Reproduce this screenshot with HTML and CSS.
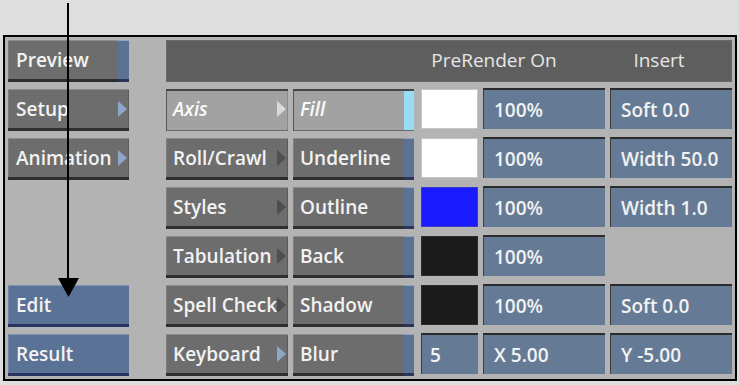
FILE: index.html
```html
<!DOCTYPE html>
<html lang="en">
<head>
    <meta charset="UTF-8">
    <meta name="viewport" content="width=device-width, initial-scale=1.0">
    <title>Text Layer Editor</title>
    <link rel="stylesheet" href="styles.css">
</head>
<body>
    <div class="panel">
        <div class="nav">
            <div class="btn">Preview <span class="strip wide"></span></div>
            <div class="btn">Setup <span class="tri"></span></div>
            <div class="btn">Animation <span class="tri"></span></div>
            <div class="btn blue editBtn">Edit</div>
            <div class="btn blue">Result</div>
        </div>

        <div class="grid">
            <div class="header">
                <span>PreRender On</span>
                <span>Insert</span>
            </div>

            <div class="btn active">Axis <span class="tri light"></span></div>
            <div class="btn active">Fill <span class="strip cyan"></span></div>
            <div class="swatch white"></div>
            <div class="field">100%</div>
            <div class="field">Soft 0.0</div>

            <div class="btn">Roll/Crawl <span class="tri dark"></span></div>
            <div class="btn">Underline <span class="strip"></span></div>
            <div class="swatch white"></div>
            <div class="field">100%</div>
            <div class="field">Width 50.0</div>

            <div class="btn">Styles <span class="tri dark"></span></div>
            <div class="btn">Outline <span class="strip"></span></div>
            <div class="swatch blueSwatch"></div>
            <div class="field">100%</div>
            <div class="field">Width 1.0</div>

            <div class="btn">Tabulation <span class="tri dark"></span></div>
            <div class="btn">Back <span class="strip"></span></div>
            <div class="swatch black"></div>
            <div class="field">100%</div>
            <div class="empty"></div>

            <div class="btn">Spell Check <span class="tri dark"></span></div>
            <div class="btn">Shadow <span class="strip"></span></div>
            <div class="swatch black"></div>
            <div class="field">100%</div>
            <div class="field">Soft 0.0</div>

            <div class="btn">Keyboard <span class="tri"></span></div>
            <div class="btn">Blur <span class="strip"></span></div>
            <div class="field small">5</div>
            <div class="field">X 5.00</div>
            <div class="field">Y -5.00</div>
        </div>
    </div>

    <!-- callout arrow pointing at the Edit button -->
    <svg class="callout" width="739" height="385" viewBox="0 0 739 385">
        <line x1="68" y1="3" x2="68" y2="282" stroke="#000" stroke-width="2"/>
        <polygon points="58,278 79,278 68.5,297" fill="#000"/>
    </svg>
</body>
</html>
```

FILE: styles.css
```css
body {
    margin: 0;
    padding: 0;
    background-color: #dedede;
    font-family: "Open Sans", "DejaVu Sans", sans-serif;
    color: #f2f2f2;
}

.panel {
    box-sizing: border-box;
    margin: 35px 0 0 3px;
    width: 734px;
    height: 346px;
    padding: 3px;
    border: 2px solid #000;
    background-color: #b3b3b3;
    display: flex;
    gap: 37px;
}

.nav,
.grid {
    display: grid;
    grid-template-rows: repeat(7, 42px);
    row-gap: 7px;
}

.nav {
    grid-template-columns: 121px;
}

.editBtn {
    grid-row: 6;
}

.editBtn + .btn {
    grid-row: 7;
}

.grid {
    grid-template-columns: 122px 121px 59px 122px 122px;
    column-gap: 5px;
}

.header {
    grid-column: 1 / -1;
    display: flex;
    align-items: center;
    padding: 0 0 2px 232px;
    background-color: #5e5e5e;
    box-shadow: inset 0 0 0 1px #6a6a6a;
    font-size: 19px;
    font-weight: 400;
    color: #e6e6e6;
}

.header span:first-child {
    width: 192px;
    text-align: center;
}

.header span:last-child {
    width: 138px;
    text-align: center;
}

.btn {
    box-sizing: border-box;
    height: 42px;
    display: flex;
    align-items: center;
    padding: 0 0 2px 8px;
    background-color: #6d6d6d;
    box-shadow: inset 0 -3px 0 #2e2e2e, inset 0 1px 0 #8c8c8c, inset 1px 0 0 #7e7e7e, inset -1px 0 0 #5a5a5a;
    font-size: 19px;
    font-weight: 600;
    white-space: nowrap;
    overflow: hidden;
}

.grid .btn {
    padding-left: 7px;
}

.btn.blue {
    background-color: #5a7296;
    box-shadow: inset 0 -3px 0 #2a3262, inset 0 1px 0 #7b91b2, inset 1px 0 0 #6e86a8;
}

.btn.active {
    background-color: #a2a2a2;
    box-shadow: inset 0 2px 0 #454545, inset 1px 0 0 #555, inset 0 -1px 0 #6a6a6a, inset -1px 0 0 #8a8a8a;
    font-style: italic;
    color: #fafafa;
}

.strip {
    align-self: stretch;
    margin: 0 0 -2px auto;
    width: 10px;
    background-color: #5b7293;
    box-shadow: inset 0 -3px 0 #2c3458, inset 0 1px 0 #90a4c2;
}

.strip.wide {
    width: 11px;
}

.strip.cyan {
    margin: 2px 0 -1px auto;
    background-color: #99dcf6;
    box-shadow: none;
}

.tri {
    width: 0;
    height: 0;
    margin: 0 2px 0 auto;
    border-left: 9px solid #8ea6c8;
    border-top: 8px solid transparent;
    border-bottom: 8px solid transparent;
}

.tri.dark {
    border-left-color: #4e4e4e;
}

.tri.light {
    border-left-color: #dadada;
}

.swatch {
    justify-self: end;
    box-sizing: border-box;
    width: 57px;
    height: 40px;
    border: 1px solid #c6c6c6;
}

.white {
    background-color: #fff;
}

.blueSwatch {
    background-color: #1a1aff;
    border-color: #3a3ad0;
}

.black {
    background-color: #1b1b1b;
    border-color: #2a2a2a;
}

.field {
    box-sizing: border-box;
    height: 41px;
    margin-top: -1px;
    display: flex;
    align-items: center;
    padding: 0 0 0 10px;
    background-color: #657b95;
    border-top: 2px solid #2b2b2b;
    border-left: 1px solid #3c3c3c;
    font-size: 19px;
    font-weight: 600;
    white-space: nowrap;
}

.field.small {
    justify-self: end;
    width: 57px;
    padding-left: 8px;
}

.callout {
    position: absolute;
    left: 0;
    top: 0;
    pointer-events: none;
}
```
